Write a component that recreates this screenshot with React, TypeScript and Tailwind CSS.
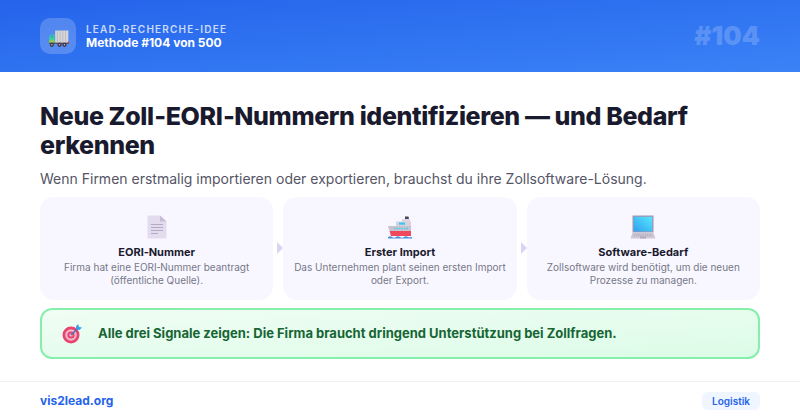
const TruckIcon = () => (
  <svg className="mt-1 ml-[2px]" width="22" height="17" viewBox="0 1 20 15.5">
    <rect x="6.5" y="1.5" width="12" height="11.5" fill="#d5d5da" />
    <path d="M8.5 2v11M11 2v11M13.5 2v11M16 2v11" stroke="#b4b4bc" strokeWidth="0.7" />
    <path d="M1 8l1.5-3H6v9H1z" fill="#3ecf9b" />
    <rect x="2.6" y="5.7" width="2.2" height="2.2" fill="#2aa7c9" />
    <rect x="1" y="10.5" width="5" height="2" fill="#a5c93a" />
    <rect x="1" y="12.5" width="18" height="1.2" fill="#57505f" />
    <rect x="18" y="11.5" width="1.2" height="1.5" fill="#e0364f" />
    <circle cx="3.5" cy="14.5" r="1.9" fill="#3d3545" />
    <circle cx="10.5" cy="14.5" r="1.9" fill="#3d3545" />
    <circle cx="15" cy="14.5" r="1.9" fill="#3d3545" />
    <circle cx="3.5" cy="14.5" r="0.7" fill="#c9c4cf" />
    <circle cx="10.5" cy="14.5" r="0.7" fill="#c9c4cf" />
    <circle cx="15" cy="14.5" r="0.7" fill="#c9c4cf" />
  </svg>
);

const DocIcon = () => (
  <svg width="20" height="24" viewBox="0 0 20 24">
    <path d="M0.5 0.5H13L19.5 6.5V23.5H0.5z" fill="#e3dcee" />
    <path d="M13 0.5L19.5 6.5H13z" fill="#c5bcd6" />
    <path d="M4 9.5h12M4 12.5h12M4 15.5h12M4 18.5h7" stroke="#b3abc2" strokeWidth="1" />
  </svg>
);

const ShipIcon = () => (
  <svg width="26" height="24" viewBox="0 0 26 24">
    <path d="M18 1.5h3.5l.5 3h-4z" fill="#4b4357" />
    <rect x="15" y="4" width="8" height="3" fill="#dcd7e2" />
    <rect x="9" y="6.5" width="15" height="4.5" fill="#d8d2de" />
    <rect x="12" y="7.5" width="6" height="2.2" fill="#3ec4f0" />
    <path d="M1 11h23v5H2.5z" fill="#c9c3d0" />
    <path d="M7 13.5h14" stroke="#45d0e8" strokeWidth="1.4" strokeDasharray="1.5 1" />
    <path d="M2.5 16H24v5H4z" fill="#f0485f" />
    <path d="M1 22c2-1 3-1 4 0s3 1 4 0 3-1 4 0 3 1 4 0 3-1 4 0 2 0 4 0v1.5H1z" fill="#4a90dc" />
  </svg>
);

const LaptopIcon = () => (
  <svg width="26" height="24" viewBox="0 0 26 24">
    <rect x="2.5" y="0.5" width="21" height="17" fill="#9d95b4" />
    <defs>
      <linearGradient id="screen" x1="0" y1="1" x2="1" y2="0">
        <stop offset="0" stopColor="#2ea0ee" />
        <stop offset="1" stopColor="#5be7ff" />
      </linearGradient>
    </defs>
    <rect x="3.8" y="1.8" width="18.4" height="14.6" fill="url(#screen)" />
    <path d="M2.5 17.5h21L25.5 23.5H0.5z" fill="#cfc9d8" />
    <path d="M4 19.3h18M3.5 20.9h19" stroke="#a9a2b5" strokeWidth="0.8" strokeDasharray="1.4 0.8" />
    <rect x="10" y="21.3" width="6" height="2.2" fill="#b2abbf" />
  </svg>
);

const TargetIcon = () => (
  <svg width="21" height="21" viewBox="0 0 21 21">
    <circle cx="9" cy="12" r="8.5" fill="#e8436f" />
    <circle cx="9" cy="12" r="5.8" fill="#f0b6c8" />
    <circle cx="9" cy="12" r="3.6" fill="#e8436f" />
    <circle cx="9" cy="12" r="1.6" fill="#f0b6c8" />
    <path d="M9 12L17 4.5" stroke="#3d6fb8" strokeWidth="1.2" />
    <path d="M14 3.5L16 1l1 3 3 .5-2.5 2.5-3.5-.5z" fill="#3f9bea" />
  </svg>
);

const steps = [
  { icon: <DocIcon />, title: "EORI\u2011Nummer", lines: ["Firma hat eine EORI\u2011Nummer beantragt", "(öffentliche Quelle)."] },
  { icon: <ShipIcon />, title: "Erster Import", lines: ["Das Unternehmen plant seinen ersten Import", "oder Export."] },
  { icon: <LaptopIcon />, title: "Software-Bedarf", lines: ["Zollsoftware wird benötigt, um die neuen", "Prozesse zu managen."] },
];

const App = () => {
  return (
    <div className="flex h-[420px] w-[800px] flex-col overflow-hidden bg-white font-['Inter',sans-serif]">
      <header className="flex h-[72px] shrink-0 items-center justify-between bg-gradient-to-br from-[#2563eb] to-[#3b82f6] px-10">
        <div className="flex items-center gap-[10px]">
          <div className="flex h-9 w-9 items-center justify-center rounded-[10px] bg-white/20">
            <TruckIcon />
          </div>
          <div>
            <p className="text-[10px] leading-[13px] font-semibold tracking-[1.2px] text-white/75">LEAD-RECHERCHE-IDEE</p>
            <p className="text-[12px] leading-[14px] font-bold text-white">Methode #104 von 500</p>
          </div>
        </div>
        <span className="text-[26px] leading-none font-black text-white/20">#104</span>
      </header>

      <main className="flex-1 px-10 pt-[30px]">
        <h1 className="text-[25px] leading-[29px] font-extrabold tracking-[-0.38px] text-[#1a1a2e]">
          {"Neue Zoll\u2011EORI\u2011Nummern identifizieren — und Bedarf erkennen"}
        </h1>
        <p className="mt-[8px] text-[14px] leading-[22px] text-[#555566]">
          Wenn Firmen erstmalig importieren oder exportieren, brauchst du ihre Zollsoftware-Lösung.
        </p>

        <div className="mt-[7px] flex gap-[10px]">
          {steps.map((step, i) => (
            <div key={step.title} className="relative flex h-[103px] flex-1 flex-col items-center rounded-[14px] bg-[#f8f7ff] pt-[17px] text-center">
              <div className="flex h-[25px] items-center justify-center">{step.icon}</div>
              <p className="mt-[6px] text-[11px] leading-[14px] font-bold text-[#1a1a2e]">{step.title}</p>
              <p className="mt-[2px] text-[10px] leading-[13px] text-[#777788]">
                {step.lines[0]}
                <br />
                {step.lines[1]}
              </p>
              {i < 2 && (
                <span className="absolute top-[45px] right-[-10px] h-0 w-0 border-y-[6px] border-l-[6px] border-y-transparent border-l-[#d9d4f7]" />
              )}
            </div>
          ))}
        </div>

        <div className="mt-[8px] flex h-[51px] items-center gap-[15px] rounded-[12px] border-2 border-[#86efac] bg-gradient-to-br from-[#f0fdf4] to-[#dcfce7] pl-[20px]">
          <TargetIcon />
          <p className="text-[13px] font-bold text-[#166534]">
            Alle drei Signale zeigen: Die Firma braucht dringend Unterstützung bei Zollfragen.
          </p>
        </div>
      </main>

      <footer className="flex h-[39px] shrink-0 items-center justify-between border-t border-[#f0f0f0] px-10">
        <span className="text-[12px] font-bold text-[#2563eb]">vis2lead.org</span>
        <span className="rounded-md bg-[#eff6ff] px-[10px] py-[2px] text-[10px] leading-[14px] font-semibold text-[#2563eb]">Logistik</span>
      </footer>
    </div>
  );
};

export default App;
